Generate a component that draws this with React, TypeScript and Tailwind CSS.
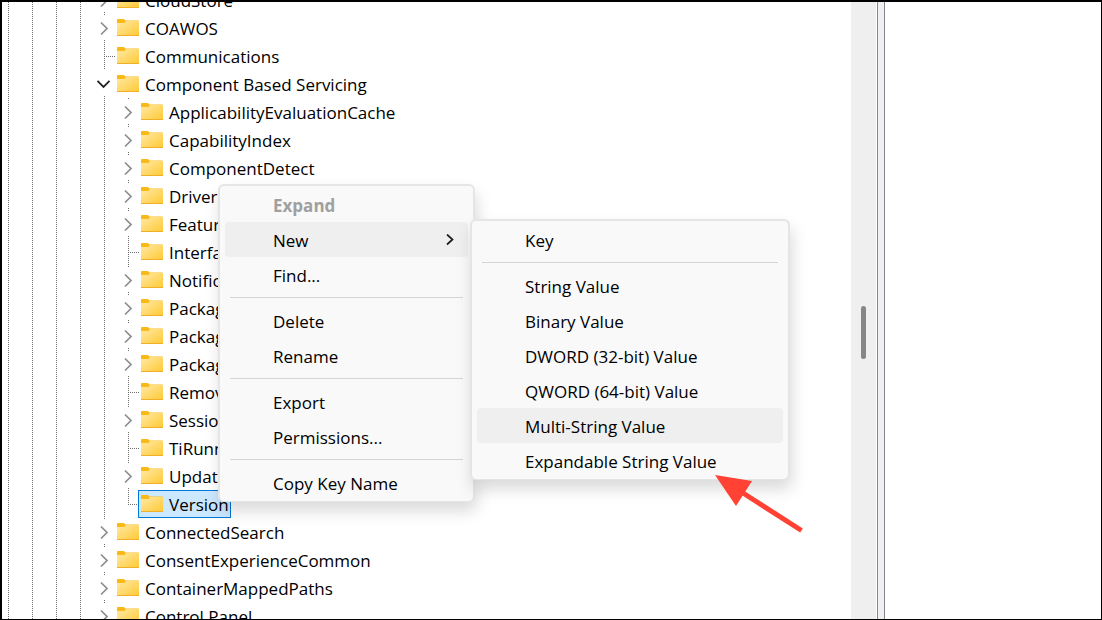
import { useState } from "react";
import clsx from "clsx";

type Key = {
  name: string;
  level: number;
  branch: "collapsed" | "expanded" | "leaf";
  last?: boolean;
};

type MenuEntry = {
  label: string;
  disabled?: boolean;
};

const keys: Key[] = [
  { name: "CloudStore", level: 4, branch: "collapsed" },
  { name: "COAWOS", level: 4, branch: "collapsed" },
  { name: "Communications", level: 4, branch: "leaf" },
  { name: "Component Based Servicing", level: 4, branch: "expanded" },
  { name: "ApplicabilityEvaluationCache", level: 5, branch: "collapsed" },
  { name: "CapabilityIndex", level: 5, branch: "collapsed" },
  { name: "ComponentDetect", level: 5, branch: "collapsed" },
  { name: "DriverOps", level: 5, branch: "collapsed" },
  { name: "Features", level: 5, branch: "collapsed" },
  { name: "Interface", level: 5, branch: "leaf" },
  { name: "Notification", level: 5, branch: "collapsed" },
  { name: "Package", level: 5, branch: "collapsed" },
  { name: "Packages", level: 5, branch: "collapsed" },
  { name: "PackageSet", level: 5, branch: "collapsed" },
  { name: "Removed", level: 5, branch: "leaf" },
  { name: "Sessions", level: 5, branch: "collapsed" },
  { name: "TiRunning", level: 5, branch: "leaf" },
  { name: "Updates", level: 5, branch: "collapsed" },
  { name: "Version", level: 5, branch: "leaf", last: true },
  { name: "ConnectedSearch", level: 4, branch: "collapsed" },
  { name: "ConsentExperienceCommon", level: 4, branch: "collapsed" },
  { name: "ContainerMappedPaths", level: 4, branch: "collapsed" },
  { name: "Control Panel", level: 4, branch: "collapsed" },
];

const newEntries: MenuEntry[][] = [
  [{ label: "Key" }],
  [
    { label: "String Value" },
    { label: "Binary Value" },
    { label: "DWORD (32-bit) Value" },
    { label: "QWORD (64-bit) Value" },
    { label: "Multi-String Value" },
    { label: "Expandable String Value" },
  ],
];

const menuEntries: MenuEntry[][] = [
  [{ label: "Expand", disabled: true }, { label: "New" }, { label: "Find..." }],
  [{ label: "Delete" }, { label: "Rename" }],
  [{ label: "Export" }, { label: "Permissions..." }],
  [{ label: "Copy Key Name" }],
];

function Guide({ d }: { d: string }) {
  return (
    <svg className="h-7 w-6 shrink-0" viewBox="0 0 24 28" aria-hidden="true">
      <path d={d} stroke="#6e6e6e" strokeWidth="1" strokeDasharray="1 1" fill="none" shapeRendering="crispEdges" />
    </svg>
  );
}

function FolderIcon() {
  return (
    <svg className="mt-1 h-[17px] w-[22px] shrink-0" viewBox="0 0 22 17" aria-hidden="true">
      <defs>
        <linearGradient id="folder" x1="0" y1="0" x2="1" y2="1">
          <stop offset="0" stopColor="#ffe9a6" />
          <stop offset="1" stopColor="#ffc933" />
        </linearGradient>
      </defs>
      <path d="M0 1Q0 0 1 0H7L8.500 1.500H21Q22 1.500 22 2.500V6H0Z" fill="#fbb917" />
      <path d="M0 4H7.500L9 2H22V17H0Z" fill="url(#folder)" />
      <path d="M0 16H22V17H0Z" fill="#f0b02a" />
    </svg>
  );
}

function Expander({ item }: { item: Key }) {
  if (item.branch === "leaf") {
    return (
      <Guide d={item.last ? "M12.5 0V15M14 14.5H24" : "M12.5 0V28M14 14.5H24"} />
    );
  }
  const open = item.branch === "expanded";
  return (
    <button className="h-7 w-6 shrink-0" aria-label={(open ? "Collapse " : "Expand ") + item.name}>
      <svg className="h-7 w-6" viewBox="0 0 24 28" fill="none" aria-hidden="true">
        <path d={open ? "M12 26H13V27H12Z" : "M12 0H13V1H12ZM12 26H13V27H12Z"} fill="#6e6e6e" />
        {open ? (
          <path d="M5.500 10.800L11.500 17L17.500 10.800" stroke="#222" strokeWidth="1.800" />
        ) : (
          <path d="M9 8.500L15 14.500L9 20.500" stroke="#8c8c8c" strokeWidth="1.700" />
        )}
      </svg>
    </button>
  );
}

function TreeRow({ item, selected, onSelect }: { item: Key; selected: boolean; onSelect: () => void }) {
  return (
    <li className="flex h-7 items-center" role="treeitem" aria-selected={selected}>
      {Array.from({ length: item.level }, (_, i) => (
        <Guide key={i} d="M12.5 0V28" />
      ))}
      <Expander item={item} />
      <button
        onClick={onSelect}
        className={clsx(
          "-ml-0.5 flex h-7 items-start gap-1.5 border pr-px pl-0.5 whitespace-nowrap",
          selected ? "border-[#0078d7] bg-[#cce8ff]" : "border-transparent"
        )}
      >
        <FolderIcon />
        <span className="leading-7">{item.name}</span>
      </button>
    </li>
  );
}

function Menu({ groups, active, label, className }: { groups: MenuEntry[][]; active: string; label: string; className: string }) {
  return (
    <ul
      role="menu"
      aria-label={label}
      className={clsx(
        "absolute rounded-md border-2 border-b border-[#e5e5e5] bg-[#f9f9f9] px-[5px] py-px shadow-[2px_9px_16px_rgba(0,0,0,0.15)]",
        className
      )}
    >
      {groups.map((group, g) => (
        <li key={g} role="none">
          {g > 0 && <hr className="mx-[5px] my-[5px] border-[#d5d5d5]" />}
          <ul role="group">
            {group.map((entry) => (
              <li key={entry.label} role="none" className="relative">
                <button
                  role="menuitem"
                  disabled={entry.disabled}
                  className={clsx(
                    "flex h-[35px] w-full items-center justify-between rounded pr-3.5 pl-12 whitespace-nowrap hover:bg-[#efefef]",
                    entry.disabled && "font-bold text-[#a0a0a0]",
                    entry.label === active && "bg-[#efefef]"
                  )}
                >
                  <span className="pt-0.5">{entry.label}</span>
                  {entry.label === "New" && (
                    <svg className="h-3 w-2" viewBox="0 0 8 12" fill="none" aria-hidden="true">
                      <path d="M1 0.500L6.500 5.500L1 10.500" stroke="#1a1a1a" strokeWidth="1.700" />
                    </svg>
                  )}
                </button>
                {entry.label === "New" && (
                  <Menu
                    groups={newEntries}
                    active="Multi-String Value"
                    label="New"
                    className="-top-[3px] left-full ml-0.5 w-80"
                  />
                )}
              </li>
            ))}
          </ul>
        </li>
      ))}
    </ul>
  );
}

export default function App() {
  const [selected, setSelected] = useState("Version");

  return (
    <main className="relative flex h-screen overflow-hidden border-t-2 border-r border-b border-l-2 border-black bg-white font-['Open_Sans','Noto_Sans',sans-serif] text-[17px] text-black">
      <ul role="tree" aria-label="Registry keys" className="-mt-4 -ml-1.5 min-w-0 flex-1">
        {keys.map((item) => (
          <TreeRow
            key={item.name}
            item={item}
            selected={item.name === selected}
            onSelect={() => setSelected(item.name)}
          />
        ))}
      </ul>

      <div className="mr-px flex w-[25px] justify-center bg-[#efefef] pt-[304px]">
        <div className="h-[53px] w-[5px] rounded-full bg-[#868686]"></div>
      </div>
      <div className="w-2 border-x border-[#828790] bg-[#f0f0f0]"></div>
      <section aria-label="Values" className="w-[216px]"></section>

      <Menu groups={menuEntries} active="New" label="Key actions" className="top-[182px] left-[216px] w-[257px]" />

      <svg className="pointer-events-none absolute top-[472px] left-[712px] h-16 w-24" viewBox="0 0 96 64" aria-hidden="true">
        <path d="M1 1L38 7L22 32Z" fill="#ff4234" />
        <path d="M29 19L87.500 56.500" stroke="#ff4234" strokeWidth="5" />
      </svg>
    </main>
  );
}
